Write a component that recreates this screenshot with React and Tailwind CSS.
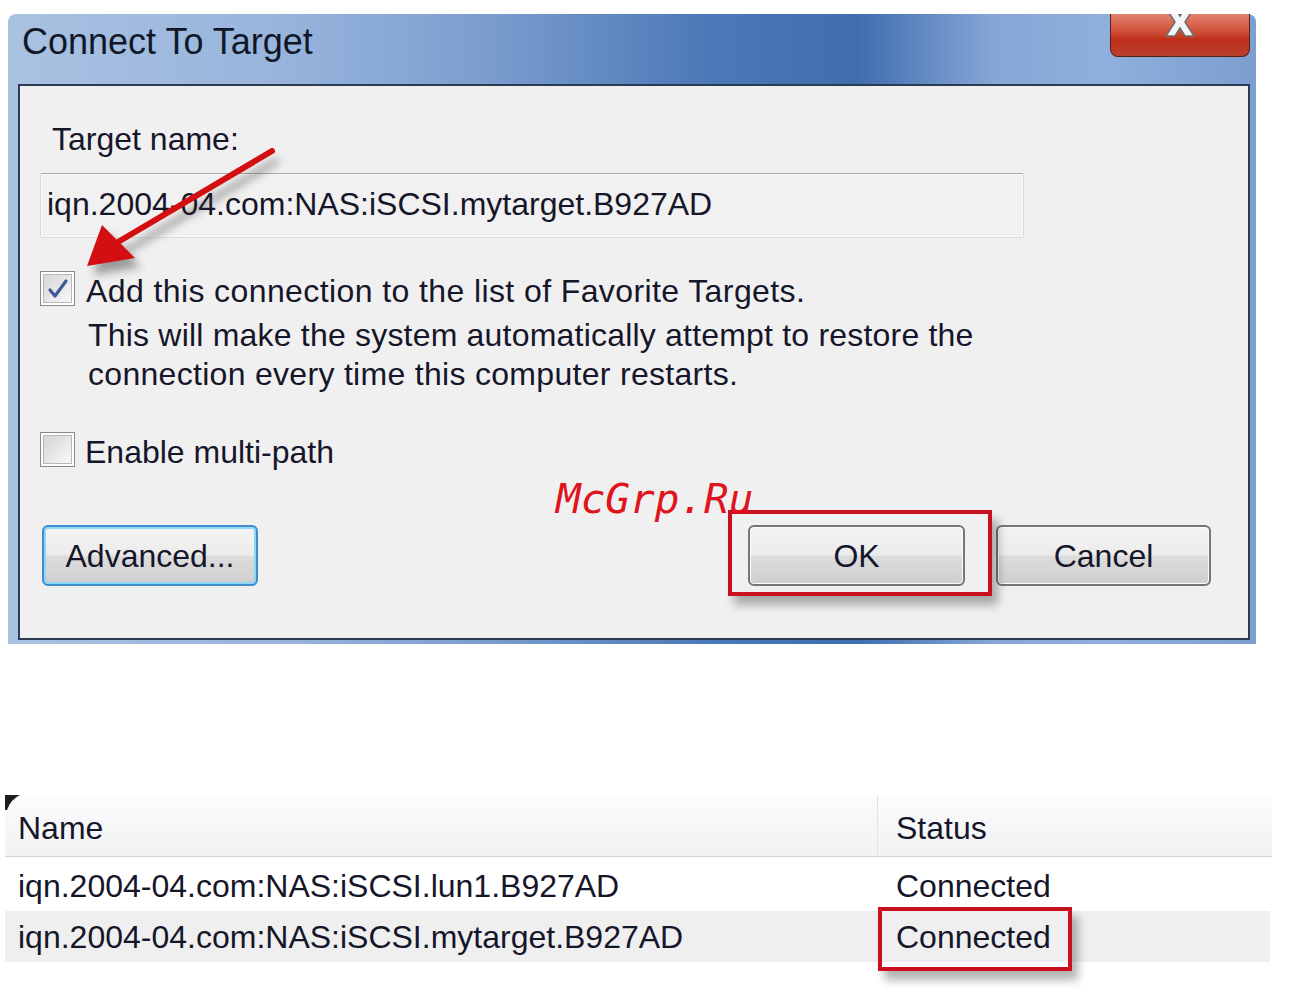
import React from 'react';

function CheckBox({ checked = false }) {
  return (
    <div className="w-[35px] h-[35px] shrink-0 border border-[#8a8a8a] bg-white p-[2px]">
      <div className="w-full h-full border border-[#b8b8b8] bg-[linear-gradient(135deg,#d6d6d6,#f7f7f7)] flex items-center justify-center">
        {checked && (
          <svg width="22" height="22" viewBox="0 0 22 22">
            <path d="M3 12 L8 18 L19 3" fill="none" stroke="#3f5a9a" strokeWidth="3.2" strokeLinecap="round" strokeLinejoin="round" />
          </svg>
        )}
      </div>
    </div>
  );
}

function WinButton({ children, focused = false, className = '' }) {
  return (
    <div
      className={
        'h-[61px] rounded-[6px] flex items-center justify-center text-[32px] leading-[40px] bg-[linear-gradient(#f4f4f4_0%,#ececec_48%,#dcdcdc_52%,#cfcfcf_100%)] ' +
        (focused
          ? 'border-2 border-[#3d8ec9] shadow-[inset_0_0_0_2px_#8fd6f7] '
          : 'border-2 border-[#767676] shadow-[inset_0_0_0_1px_#fbfbfb] ') +
        className
      }
    >
      {children}
    </div>
  );
}

function Arrow() {
  return (
    <svg className="absolute left-[60px] top-[130px] pointer-events-none" width="250" height="170" viewBox="0 0 250 170">
      <defs>
        <filter id="blur" x="-20%" y="-20%" width="140%" height="140%">
          <feGaussianBlur stdDeviation="4" />
        </filter>
      </defs>
      <g transform="translate(6,9)" opacity="0.45" filter="url(#blur)">
        <line x1="212" y1="21" x2="60" y2="112" stroke="#333" strokeWidth="6" />
        <polygon points="27,136 42,95 75,128" fill="#333" />
      </g>
      <line x1="212" y1="21" x2="58" y2="112" stroke="#d40f12" strokeWidth="6" strokeLinecap="round" />
      <polygon points="27,136 42,95 75,128" fill="#d40f12" />
    </svg>
  );
}

function Dialog() {
  return (
    <div className="w-[1248px] h-[630px] flex flex-col rounded-t-[8px] bg-[linear-gradient(90deg,#a9c2e2_0%,#98b4dc_22%,#7c9ecf_38%,#4c79b7_56%,#3f6dae_68%,#86a7d6_79%,#8fb0dc_88%,#7c9ed0_100%)]">
      <div className="h-[70px] relative pl-[14px] pt-[6px]">
        <span className="text-[36px] leading-[44px] text-[#101828]">Connect To Target</span>
        <div className="absolute right-[6px] top-0 w-[140px] h-[43px] overflow-hidden rounded-b-[8px] border border-t-0 border-[#5b1f17] bg-[linear-gradient(#e4826f_0%,#d2523c_40%,#c0301c_60%,#b8402e_100%)] flex justify-center">
          <svg className="-mt-[8px]" width="34" height="32" viewBox="0 0 34 32">
            <path d="M3 2 L12 2 L17 10 L22 2 L31 2 L22 16 L31 30 L22 30 L17 22 L12 30 L3 30 L12 16 Z" fill="#f4f4f4" stroke="#6b6b6b" strokeWidth="1.5" />
          </svg>
        </div>
      </div>
      <div className="flex-1 pl-[10px] pr-[6px] pb-[4px]">
        <div className="relative h-full border-2 border-[#2c3a52] bg-[#f0f0f0] flex flex-col">
          <div className="mt-[33px] ml-[32px] text-[32px] leading-[40px]">Target name:</div>
          <div className="mt-[14px] ml-[20px] w-[984px] h-[65px] border border-[#dadada] border-t-[#a9a9a9] rounded-[2px] bg-[#f1f1f1] shadow-[inset_0_0_0_1px_#fbfbfb] flex items-center pl-[6px] pb-[4px] text-[32px] leading-[40px]">
            iqn.2004-04.com:NAS:iSCSI.mytarget.B927AD
          </div>
          <div className="mt-[33px] ml-[20px] flex gap-[11px]">
            <CheckBox checked />
            <div className="text-[32px] leading-[40px]">
              <div className="tracking-[0.4px]">Add this connection to the list of Favorite Targets.</div>
              <div className="mt-[4px] pl-[2px] tracking-[0.2px]">This will make the system automatically attempt to restore the</div>
              <div className="pl-[2px] -mt-[1px] tracking-[0.3px]">connection every time this computer restarts.</div>
            </div>
          </div>
          <div className="mt-[38px] ml-[20px] flex gap-[10px]">
            <CheckBox />
            <div className="text-[32px] leading-[40px]">Enable multi-path</div>
          </div>
          <div className="mt-[53px] flex">
            <WinButton focused className="ml-[22px] w-[216px]">Advanced...</WinButton>
            <div className="relative ml-auto">
              <WinButton className="w-[217px]">OK</WinButton>
              <div className="absolute -left-[20px] -top-[15px] -right-[27px] -bottom-[10px] border-4 border-[#c8101e] shadow-[6px_9px_9px_rgba(0,0,0,0.3)]" />
            </div>
            <WinButton className="ml-[31px] mr-[37px] w-[215px]">Cancel</WinButton>
          </div>
          <div className="absolute left-[536px] top-[393px] text-[41px] leading-[40px] italic text-[#e0141c] font-['DejaVu_Sans_Mono',monospace]">
            McGrp.Ru
          </div>
        </div>
      </div>
    </div>
  );
}

function SessionTable() {
  return (
    <div className="relative w-[1267px] text-[32px] leading-[40px]">
      <svg className="absolute left-0 top-0" width="16" height="16" viewBox="0 0 16 16">
        <path d="M0 0 L15 0 Q6 4 2 15 L0 15 Z" fill="#1e1e1e" />
      </svg>
      <div className="flex h-[62px] border-b border-[#d4d4d4] bg-[linear-gradient(#fcfcfd,#f1f2f4)]">
        <div className="w-[873px] pl-[13px] pt-[13px] border-r border-[#e3e3e3]">Name</div>
        <div className="flex-1 pl-[18px] pt-[13px]">Status</div>
      </div>
      <div className="flex h-[54px]">
        <div className="w-[873px] pl-[13px] pt-[9px]">iqn.2004-04.com:NAS:iSCSI.lun1.B927AD</div>
        <div className="flex-1 pl-[18px] pt-[9px]">Connected</div>
      </div>
      <div className="flex h-[51px] bg-[#efefef] mr-[2px]">
        <div className="w-[873px] pl-[13px] pt-[6px]">iqn.2004-04.com:NAS:iSCSI.mytarget.B927AD</div>
        <div className="relative flex-1 pl-[18px] pt-[6px]">
          Connected
          <div className="absolute left-0 -top-[4px] w-[194px] h-[64px] border-4 border-[#c8101e] shadow-[6px_9px_9px_rgba(0,0,0,0.3)]" />
        </div>
      </div>
    </div>
  );
}

export default function App() {
  return (
    <div className="relative w-[1297px] h-[994px] overflow-hidden bg-white text-[#16162a] font-['Liberation_Sans',Arial,sans-serif]">
      <div className="pt-[14px] pl-[8px]">
        <Dialog />
      </div>
      <div className="mt-[151px] ml-[5px]">
        <SessionTable />
      </div>
      <Arrow />
    </div>
  );
}
